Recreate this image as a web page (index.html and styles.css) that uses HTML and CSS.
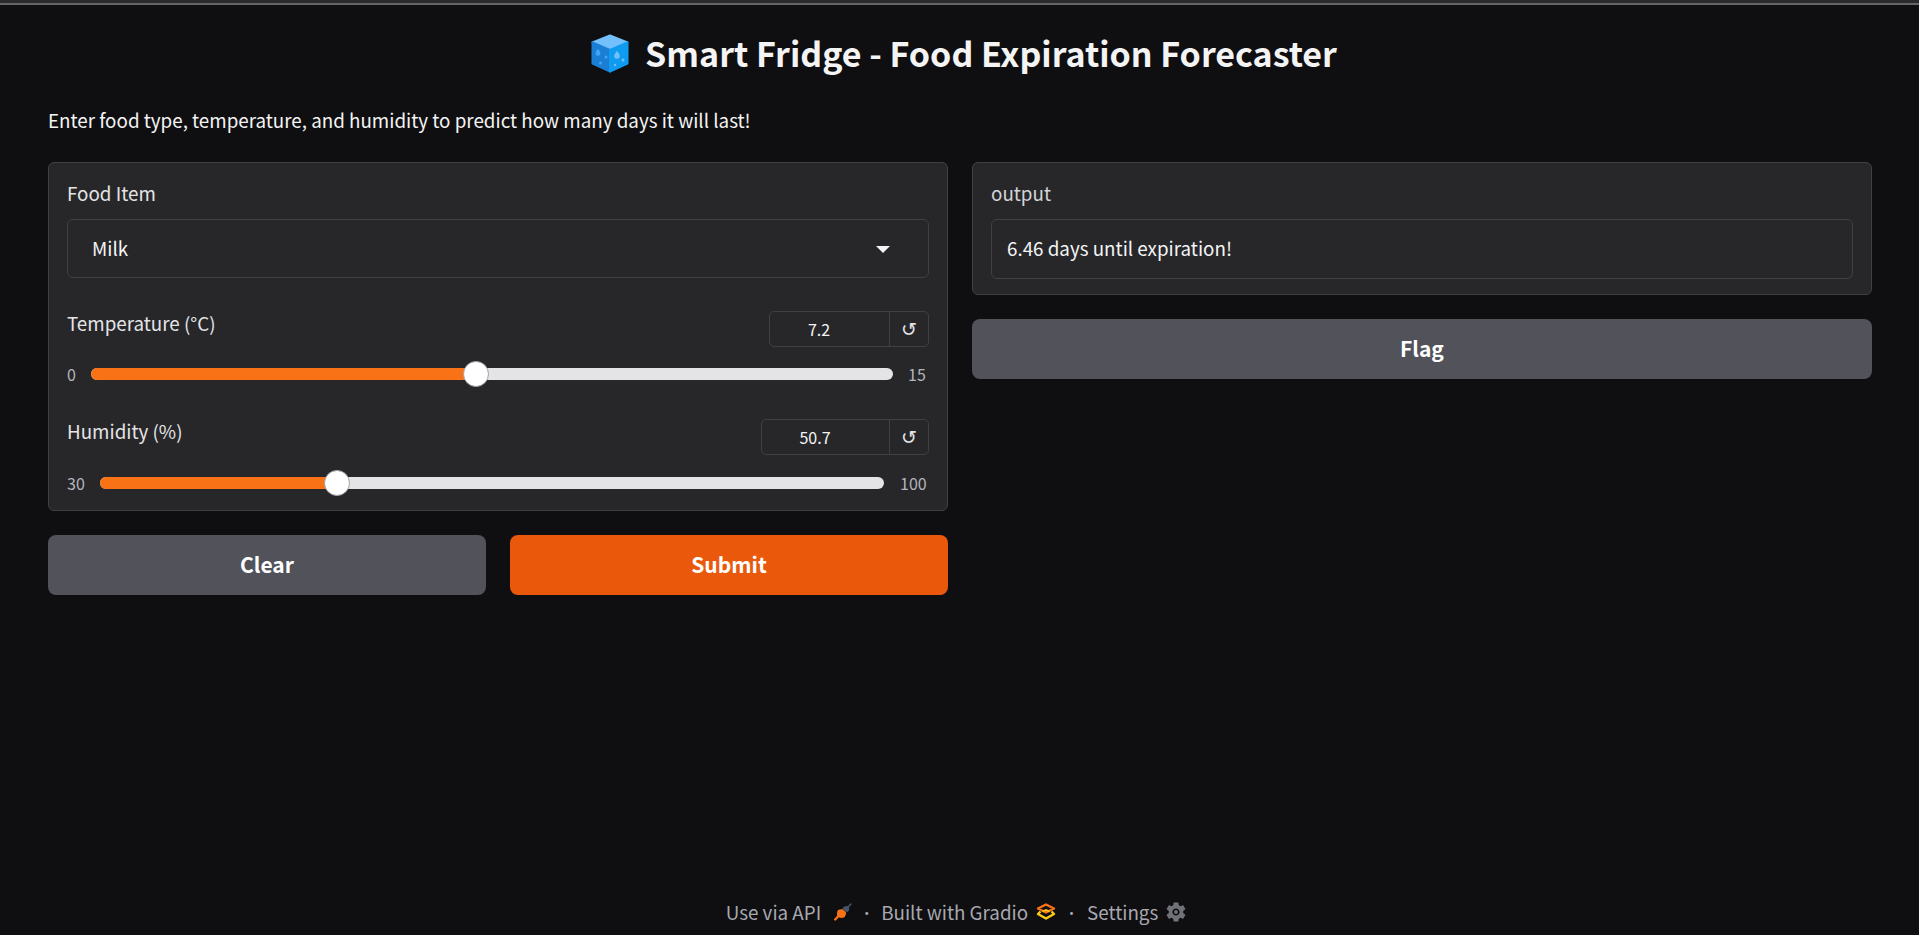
FILE: index.html
```html
<!DOCTYPE html>
<html lang="en">
<head>
<meta charset="utf-8">
<title>Smart Fridge - Food Expiration Forecaster</title>
<link rel="stylesheet" href="styles.css">
</head>
<body>
<div class="topline"></div>
<main class="app">
  <h1 class="title">
    <svg class="cube" viewBox="0 0 38 39" aria-hidden="true">
      <path d="M19 1.500 36.500 8.500 19 16 1.500 8.500Z" fill="#74c0fc" stroke="#74c0fc" stroke-width="2" stroke-linejoin="round"/>
      <path d="M1.500 8.500 19 16V37.500L1.500 29.500Z" fill="#1a7fd4" stroke="#1a7fd4" stroke-width="2" stroke-linejoin="round"/>
      <path d="M36.500 8.500 19 16V37.500L36.500 29.500Z" fill="#0e9bf0" stroke="#0e9bf0" stroke-width="2" stroke-linejoin="round"/>
      <path d="M7 15c1.600 2 2.400 3.200 2.400 4.400a2.400 2.400 0 0 1-4.800 0C4.600 18.200 5.400 17 7 15Z" fill="#42a5f5"/>
      <circle cx="15" cy="23" r="1.500" fill="#42a5f5"/>
      <circle cx="9.500" cy="29" r="1.500" fill="#42a5f5"/>
      <path d="M26 17c1.800 2.200 2.800 3.600 2.800 5a2.800 2.800 0 0 1-5.600 0C23.200 20.600 24.200 19.200 26 17Z" fill="#74c0fc"/>
      <circle cx="32" cy="26" r="1.500" fill="#74c0fc"/>
      <circle cx="24" cy="31" r="1.200" fill="#74c0fc"/>
    </svg>
    <span>Smart Fridge - Food Expiration Forecaster</span>
  </h1>
  <p class="desc">Enter food type, temperature, and humidity to predict how many days it will last!</p>
  <div class="columns">
    <section class="col">
      <div class="panel panel-inputs">
        <div class="field">
          <div class="label">Food Item</div>
          <div class="select"><span class="select-value">Milk</span><span class="caret"></span></div>
        </div>
        <div class="slider-block temp">
          <div class="slider-head">
            <div class="label">Temperature (°C)</div>
            <div class="numbox num-temp"><span class="numval">7.2</span><span class="reset">↺</span></div>
          </div>
          <div class="slider-row">
            <span class="end end-min">0</span>
            <div class="track"><div class="fill" style="width:48%"></div><div class="thumb" style="left:48%"></div></div>
            <span class="end end-max">15</span>
          </div>
        </div>
        <div class="slider-block hum">
          <div class="slider-head">
            <div class="label">Humidity (%)</div>
            <div class="numbox num-hum"><span class="numval">50.7</span><span class="reset">↺</span></div>
          </div>
          <div class="slider-row">
            <span class="end end-min">30</span>
            <div class="track"><div class="fill" style="width:30.200%"></div><div class="thumb" style="left:30.200%"></div></div>
            <span class="end end-max">100</span>
          </div>
        </div>
      </div>
      <div class="btn-row">
        <button class="btn btn-gray">Clear</button>
        <button class="btn btn-orange">Submit</button>
      </div>
    </section>
    <section class="col">
      <div class="panel panel-output">
        <div class="label label-output">output</div>
        <div class="outbox">6.46 days until expiration!</div>
      </div>
      <button class="btn btn-gray btn-flag">Flag</button>
    </section>
  </div>
</main>
<footer class="footer">
  <span>Use via API</span>
  <svg class="ic ic-plug" viewBox="0 0 18 18" aria-hidden="true">
    <path d="M17 1 14 4" stroke="#475569" stroke-width="1.600" fill="none" stroke-linecap="round"/>
    <path d="M8.500 5.500C9.500 3.300 12.500 2.300 14.500 3.500 16 5.500 15 8.500 12.500 9.500Z" fill="#475569"/>
    <path d="M4 7C5.800 6.300 7.500 6 9 6.500L12 9.500C12.300 11 11.500 13.300 10 14.500 8 15.500 5 15 3.300 13 2.700 11 3 8.800 4 7Z" fill="#f97316"/>
    <path d="M4.500 13 1.200 16.500" stroke="#f97316" stroke-width="2.400" fill="none" stroke-linecap="round"/>
  </svg>
  <span class="dot">·</span>
  <span>Built with Gradio</span>
  <svg class="ic ic-logo" viewBox="0 0 20 17" aria-hidden="true">
    <path d="M10 1.500 18 5.500 10 9.500 2 5.500Z" fill="none" stroke="#f97316" stroke-width="2.400" stroke-linejoin="round"/>
    <path d="M4.500 8.500 2 11 10 15.500 18 11 15.500 8.500" fill="none" stroke="#facc15" stroke-width="2.400" stroke-linejoin="round"/>
    <path d="M6.500 8.500 10 7 13.500 8.500" fill="none" stroke="#facc15" stroke-width="1.800"/>
  </svg>
  <span class="dot dot2">·</span>
  <span>Settings</span>
  <svg class="ic ic-gear" viewBox="2 2 20 20" aria-hidden="true">
    <path fill="#71717a" fill-rule="evenodd" d="M19.140 12.940c.04-.3.06-.61.06-.94 0-.32-.02-.64-.07-.94l2.030-1.580c.18-.14.23-.41.12-.61l-1.920-3.320c-.12-.22-.37-.29-.59-.22l-2.390.96c-.5-.38-1.030-.7-1.620-.94l-.36-2.540c-.04-.24-.24-.41-.48-.41h-3.840c-.24 0-.43.17-.47.41l-.36 2.540c-.59.24-1.130.57-1.620.94l-2.390-.96c-.22-.08-.47 0-.59.22L2.740 8.870c-.12.21-.08.47.12.61l2.030 1.580c-.05.3-.09.63-.09.94s.02.64.07.94l-2.030 1.580c-.18.14-.23.41-.12.61l1.920 3.320c.12.22.37.29.59.22l2.390-.96c.5.38 1.030.7 1.620.94l.36 2.540c.05.24.24.41.48.41h3.840c.24 0 .44-.17.47-.41l.36-2.540c.59-.24 1.130-.56 1.620-.94l2.390.96c.22.08.47 0 .59-.22l1.920-3.320c.12-.22.07-.47-.12-.61l-2.010-1.580zM12 15.600c-1.980 0-3.600-1.620-3.600-3.600s1.620-3.600 3.600-3.600 3.600 1.620 3.600 3.600-1.620 3.600-3.600 3.600z"/>
    <circle cx="12" cy="12" r="1.900" fill="#71717a"/>
  </svg>
</footer>
</body>
</html>
```
FILE: styles.css
```css
* { box-sizing: border-box; }
html, body { height: 100%; }
body {
  margin: 0;
  background: #0f0f11;
  color: #f4f4f5;
  font-family: "Noto Sans CJK SC", "Noto Sans", sans-serif;
  display: flex;
  flex-direction: column;
  overflow: hidden;
}
.topline {
  height: 5px;
  background: #666668;
  border-top: 3px solid #2a2a2c;
  flex: none;
}
.app {
  flex: 1;
  padding: 0 47px 0 48px;
}
.title {
  margin: 29px 0 0;
  padding-left: 8px;
  height: 38px;
  display: flex;
  align-items: center;
  justify-content: center;
  gap: 16px;
  font-size: 34px;
  font-weight: 600;
  line-height: 38px;
  color: #f4f4f5;
}
.cube { width: 38px; height: 39px; flex: none; }
.desc {
  margin: 36px 0 0;
  font-size: 18.8px;
  line-height: 24px;
  height: 24px;
}
.columns {
  margin-top: 30px;
  display: grid;
  grid-template-columns: 900px 900px;
  column-gap: 24px;
  align-items: start;
}
.panel {
  background: #27272a;
  border: 1px solid #3f3f46;
  border-radius: 6px;
  padding: 0 18px;
}
.panel-inputs { height: 349px; }
.panel-output { height: 133px; }
.label {
  font-size: 18.8px;
  line-height: 24px;
  color: #e4e4e7;
}
.field { padding-top: 18px; }
.select {
  margin-top: 14px;
  height: 59px;
  border: 1px solid #3f3f46;
  border-radius: 6px;
  padding: 0 38px 0 24px;
  display: flex;
  align-items: center;
  justify-content: space-between;
  font-size: 18.8px;
}
.select-value { margin-bottom: 2px; }
.caret {
  width: 0;
  height: 0;
  margin-top: 2px;
  border-left: 7px solid transparent;
  border-right: 7px solid transparent;
  border-top: 7px solid #f4f4f5;
}
.slider-block { margin-top: 33px; }
.slider-block.hum { margin-top: 39px; }
.slider-head {
  display: flex;
  justify-content: space-between;
  align-items: flex-start;
  height: 36px;
}
.numbox {
  height: 36px;
  border: 1px solid #3f3f46;
  border-radius: 5px;
  display: flex;
  font-size: 16px;
  line-height: 34px;
}
.num-temp { width: 160px; }
.num-hum { width: 168px; }
.numval { flex: 1; text-align: center; padding-right: 21px; }
.reset {
  width: 39px;
  flex: none;
  border-left: 1px solid #3f3f46;
  text-align: center;
  color: #e4e4e7;
  font-size: 19px;
  font-family: "DejaVu Sans", sans-serif;
}
.slider-row {
  margin-top: 21px;
  display: flex;
  align-items: center;
  height: 12px;
}
.hum .slider-row { margin-top: 22px; }
.end {
  font-size: 16px;
  color: #b4b4bb;
  flex: none;
  line-height: 12px;
}
.temp .end-min { width: 24px; }
.temp .end-max { width: 36px; padding-left: 15px; }
.hum .end-min { width: 33px; }
.hum .end-max { width: 45px; padding-left: 16px; }
.track {
  position: relative;
  flex: 1;
  height: 12px;
  border-radius: 6px;
  background: #e4e4e7;
}
.fill {
  height: 12px;
  border-radius: 6px;
  background: #f97316;
}
.thumb {
  position: absolute;
  top: -7px;
  width: 26px;
  height: 26px;
  margin-left: -13px;
  border-radius: 50%;
  background: #fff;
  border: 1px solid #a1a1aa;
}
.btn-row {
  margin-top: 24px;
  display: grid;
  grid-template-columns: 438px 438px;
  column-gap: 24px;
}
.btn {
  height: 60px;
  border: 0;
  border-radius: 8px;
  font-family: inherit;
  font-size: 21px;
  font-weight: 600;
  color: #fff;
  padding: 0 0 2px;
}
.btn-gray { background: #52525b; }
.btn-orange { background: #ea580c; }
.btn-flag { display: block; width: 900px; margin-top: 24px; }
.label-output { padding-top: 18px; color: #d4d4d8; }
.outbox {
  margin-top: 14px;
  height: 60px;
  border: 1px solid #3f3f46;
  border-radius: 6px;
  padding: 0 15px 3px;
  display: flex;
  align-items: center;
  font-size: 18.8px;
}
.footer {
  flex: none;
  height: 44px;
  display: flex;
  align-items: center;
  justify-content: center;
  padding: 0 7px 3px 0;
  font-size: 18.8px;
  color: #a8a8b0;
}
.ic { flex: none; }
.ic-plug { width: 18px; height: 18px; margin-left: 13px; }
.ic-logo { width: 20px; height: 17px; margin-left: 8px; }
.ic-gear { width: 20px; height: 20px; margin-left: 8px; }
.dot { width: 29px; text-align: center; font-size: 14px; }
.dot2 { width: 31px; }
```
